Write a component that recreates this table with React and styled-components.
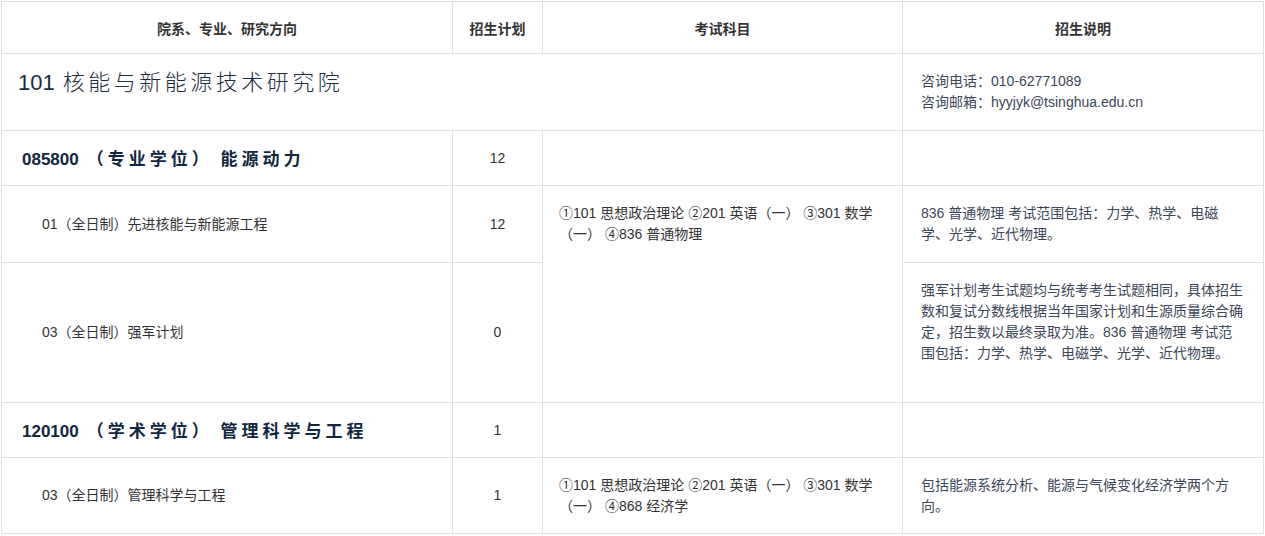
import React from "react";
import styled, { createGlobalStyle } from "styled-components";

const GlobalStyle = createGlobalStyle`
  body {
    margin: 0;
    background: #fff;
    font-family: "Liberation Sans", Arial, "Noto Sans CJK SC", sans-serif;
    color: #333;
  }
`;

const Wrap = styled.div`
  padding: 1px 0 0 1px;
`;

const Table = styled.table`
  border-collapse: collapse;
  table-layout: fixed;
  width: 1262px;
  font-size: 14px;

  td,
  th {
    border: 1px solid #dde1e6;
  }
`;

const Head = styled.th`
  height: 51px;
  font-size: 14px;
  font-weight: bold;
  color: #333;
  text-align: center;
  vertical-align: middle;
  padding: 0;
`;

const Row = styled.tr`
  height: ${(p) => p.$h}px;
`;

const Cell = styled.td`
  padding: ${(p) => p.$pad || "0 16px"};
  vertical-align: ${(p) => p.$valign || "middle"};
  text-align: ${(p) => (p.$center ? "center" : "left")};
  line-height: 21px;
  color: ${(p) => p.$color || "#333"};
`;

const Dept = styled.div`
  font-size: 22px;
  color: #1b2c3e;
  margin-top: -22px;

  span {
    margin-left: 8px;
    font-family: "Noto Sans CJK SC", sans-serif;
    font-weight: 300;
    letter-spacing: 3.5px;
  }
`;

const Major = styled.div`
  font-size: 17px;
  font-weight: bold;
  color: #0f2740;

  span {
    font-family: "Noto Sans CJK SC", sans-serif;
    letter-spacing: 4px;
    margin-left: 8px;
  }
`;

const Sub = styled.div`
  padding-left: 24px;
  font-size: 14px;
`;

const Desc = styled.div`
  font-size: 14px;
  color: #3b4757;
  line-height: 21px;
`;

export default function App() {
  return (
    <Wrap>
      <GlobalStyle />
      <Table>
        <colgroup>
          <col style={{ width: 451 }} />
          <col style={{ width: 90 }} />
          <col style={{ width: 360 }} />
          <col style={{ width: 361 }} />
        </colgroup>
        <thead>
          <tr>
            <Head>院系、专业、研究方向</Head>
            <Head>招生计划</Head>
            <Head>考试科目</Head>
            <Head>招生说明</Head>
          </tr>
        </thead>
        <tbody>
          <Row $h={77}>
            <Cell colSpan={3} $pad="0 16px">
              <Dept>
                101<span>核能与新能源技术研究院</span>
              </Dept>
            </Cell>
            <Cell $pad="0 18px">
              <Desc>
                咨询电话：010-62771089
                <br />
                咨询邮箱：hyyjyk@tsinghua.edu.cn
              </Desc>
            </Cell>
          </Row>
          <Row $h={55}>
            <Cell $pad="0 20px">
              <Major>
                085800<span>（专业学位） 能源动力</span>
              </Major>
            </Cell>
            <Cell $center>12</Cell>
            <Cell />
            <Cell />
          </Row>
          <Row $h={77}>
            <Cell>
              <Sub>01（全日制）先进核能与新能源工程</Sub>
            </Cell>
            <Cell $center>12</Cell>
            <Cell rowSpan={2} $valign="top" $pad="17px 16px">
              ①101 思想政治理论 ②201 英语（一） ③301 数学（一） ④836 普通物理
            </Cell>
            <Cell $pad="0 18px">
              <Desc>836 普通物理 考试范围包括：力学、热学、电磁学、光学、近代物理。</Desc>
            </Cell>
          </Row>
          <Row $h={140}>
            <Cell>
              <Sub>03（全日制）强军计划</Sub>
            </Cell>
            <Cell $center>0</Cell>
            <Cell $valign="top" $pad="17px 18px">
              <Desc>
                强军计划考生试题均与统考考生试题相同，具体招生数和复试分数线根据当年国家计划和生源质量综合确定，招生数以最终录取为准。836
                普通物理 考试范围包括：力学、热学、电磁学、光学、近代物理。
              </Desc>
            </Cell>
          </Row>
          <Row $h={55}>
            <Cell $pad="0 20px">
              <Major>
                120100<span>（学术学位） 管理科学与工程</span>
              </Major>
            </Cell>
            <Cell $center>1</Cell>
            <Cell />
            <Cell />
          </Row>
          <Row $h={76}>
            <Cell>
              <Sub>03（全日制）管理科学与工程</Sub>
            </Cell>
            <Cell $center>1</Cell>
            <Cell>①101 思想政治理论 ②201 英语（一） ③301 数学（一） ④868 经济学</Cell>
            <Cell $pad="0 18px">
              <Desc>包括能源系统分析、能源与气候变化经济学两个方向。</Desc>
            </Cell>
          </Row>
        </tbody>
      </Table>
    </Wrap>
  );
}
